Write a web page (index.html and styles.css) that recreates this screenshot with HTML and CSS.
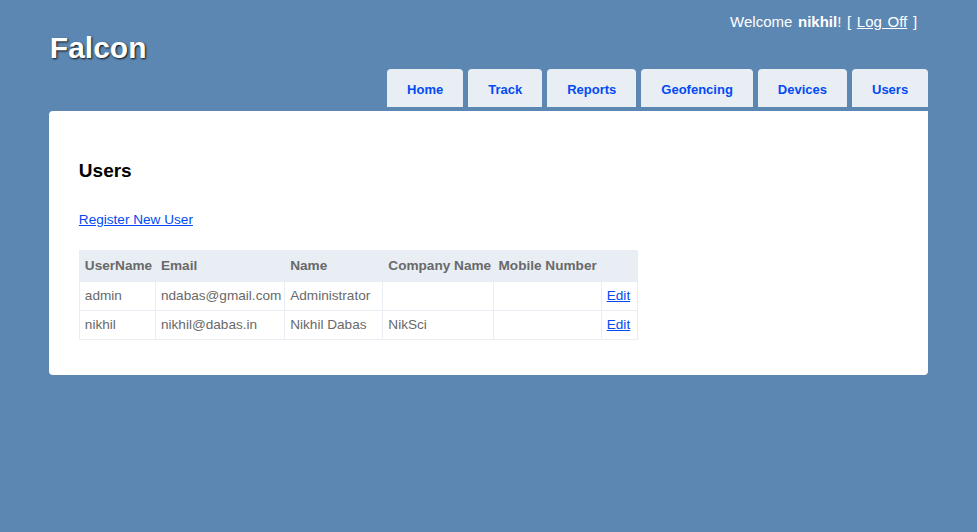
FILE: index.html
```html
<!DOCTYPE html>
<html>
<head>
<meta charset="utf-8">
<title>Users</title>
<link rel="stylesheet" href="styles.css">
</head>
<body>
<div class="page">
  <header class="header">
    <div class="topbar">
      <h1 class="title">Falcon</h1>
      <div class="login">Welcome <b>nikhil</b>! [ <a href="#" class="login-link">Log Off</a> ]</div>
    </div>
    <nav>
      <ul class="menu">
        <li><a href="#" class="tab">Home</a></li>
        <li><a href="#" class="tab">Track</a></li>
        <li><a href="#" class="tab">Reports</a></li>
        <li><a href="#" class="tab">Geofencing</a></li>
        <li><a href="#" class="tab">Devices</a></li>
        <li><a href="#" class="tab">Users</a></li>
      </ul>
    </nav>
  </header>
  <main class="main">
    <h2 class="heading">Users</h2>
    <p class="actions"><a href="#" class="link">Register New User</a></p>
    <table class="grid">
      <thead>
        <tr>
          <th class="c-user">UserName</th>
          <th class="c-email">Email</th>
          <th class="c-name">Name</th>
          <th class="c-company">Company Name</th>
          <th class="c-mobile">Mobile Number</th>
          <th class="c-edit"></th>
        </tr>
      </thead>
      <tbody>
        <tr>
          <td>admin</td>
          <td>ndabas@gmail.com</td>
          <td>Administrator</td>
          <td></td>
          <td></td>
          <td><a href="#" class="link">Edit</a></td>
        </tr>
        <tr>
          <td>nikhil</td>
          <td>nikhil@dabas.in</td>
          <td>Nikhil Dabas</td>
          <td>NikSci</td>
          <td></td>
          <td><a href="#" class="link">Edit</a></td>
        </tr>
      </tbody>
    </table>
    <div class="footer"></div>
  </main>
</div>
</body>
</html>
```

FILE: styles.css
```css
html, body {
  margin: 0;
  padding: 0;
}

body {
  background-color: #5c87b2;
  font-family: "Liberation Sans", Arial, sans-serif;
  font-size: 13.6px;
  line-height: 18px;
  color: #696969;
}

.page {
  width: 90%;
  margin: 0 auto;
}

.topbar {
  display: flex;
  justify-content: space-between;
  align-items: flex-start;
}

.title {
  margin: 0;
  padding: 28px 0 1px 1px;
  font-size: 30px;
  line-height: 40px;
  font-weight: bold;
  color: #fff;
  text-shadow: 1px 1px 2px #111;
}

.login {
  padding-top: 13px;
  margin-right: 11px;
  font-size: 15px;
  line-height: 18px;
  word-spacing: 1.5px;
  color: #fff;
}

.login-link {
  color: #fff;
  text-decoration: underline;
}

.menu {
  display: flex;
  justify-content: flex-end;
  gap: 5px;
  list-style: none;
  margin: 0;
  padding: 0 0 3px 0;
  border-bottom: 1px solid #5c87b2;
}

.tab {
  display: block;
  padding: 12px 20px 8px;
  font-size: 13px;
  line-height: 18px;
  font-weight: bold;
  text-decoration: none;
  background-color: #e8eef4;
  color: #034af3;
  border-radius: 4px 4px 0 0;
}

.main {
  background-color: #fff;
  padding: 30px 30px 15px;
  border-radius: 4px 0 4px 4px;
}

.heading {
  margin: 0;
  padding-top: 18px;
  font-size: 19px;
  line-height: 24px;
  font-weight: bold;
  color: #000;
}

.actions {
  margin: 28px 0 0;
}

.link {
  color: #034af3;
  text-decoration: underline;
}

.grid {
  margin-top: 21px;
  border: 1px solid #e8eef4;
  border-collapse: collapse;
  table-layout: fixed;
  width: 559px;
}

.grid th {
  padding: 6px 5px;
  text-align: left;
  background-color: #e8eef4;
  border: 1px solid #e8eef4;
  font-weight: bold;
  white-space: nowrap;
  color: #696969;
}

.grid td {
  padding: 5px;
  border: 1px solid #e8eef4;
  white-space: nowrap;
}

.c-user { width: 65px; }
.c-email { width: 118px; }
.c-name { width: 87px; }
.c-company { width: 99px; }
.c-mobile { width: 97px; }
.c-edit { width: 25px; }

.footer {
  padding: 10px 0;
}
```
